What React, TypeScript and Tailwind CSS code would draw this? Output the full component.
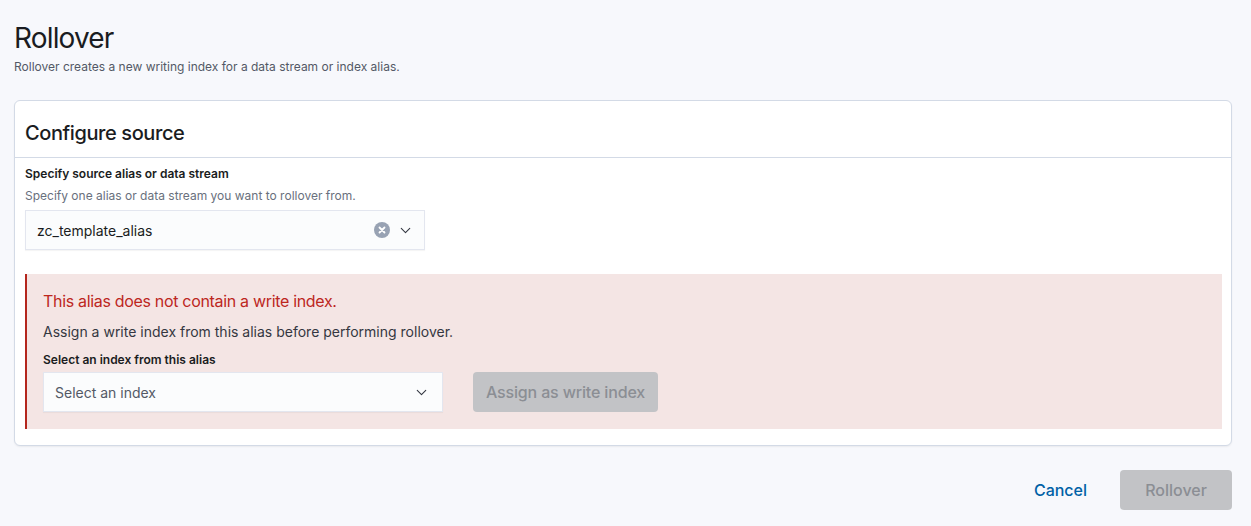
import React from 'react';
import { ChevronDown } from 'lucide-react';

const ClearIcon: React.FC = () => (
  <svg width="16" height="16" viewBox="0 0 16 16" aria-hidden="true">
    <circle cx="8" cy="8" r="8" fill="#98a2b3" />
    <path d="M5.5 5.5l5 5M10.5 5.5l-5 5" stroke="#fff" strokeWidth="1.8" strokeLinecap="round" />
  </svg>
);

const App: React.FC = () => {
  return (
    <div
      className="min-h-screen bg-[#f7f8fc] pl-[14px] pr-[19px] pt-[20px] text-[#343741]"
      style={{ fontFamily: 'Inter, "Noto Sans", sans-serif' }}
    >
      <h1 className="text-[28px] leading-[36px] font-normal tracking-[-0.03em] text-[#1a1c21]">Rollover</h1>
      <p className="mt-[3px] text-[12px] leading-[16px] text-[#535966]">
        Rollover creates a new writing index for a data stream or index alias.
      </p>

      {/* Configure source panel */}
      <div className="mt-[25px] rounded-[6px] border border-[#d3dae6] bg-white shadow-[0_1px_2px_rgba(0,0,0,0.06)]">
        <div className="border-b border-[#d3dae6] px-[10px] pt-[20px] pb-[12px]">
          <h2 className="text-[20px] leading-[24px] font-medium tracking-[-0.02em] text-[#1a1c21]">
            Configure source
          </h2>
        </div>

        <div className="pl-[10px] pr-[9px] pt-[8px] pb-[16px]">
          <div className="text-[12px] leading-[16px] font-semibold text-[#1a1c21]">
            Specify source alias or data stream
          </div>
          <div className="mt-[6px] text-[12px] leading-[16px] text-[#69707d]">
            Specify one alias or data stream you want to rollover from.
          </div>
          <div className="mt-[6px] flex h-[40px] w-[400px] items-center justify-between border border-[#e3e6ef] bg-[#fbfcfd] pl-[11px] pr-[10px] shadow-[0_1px_1px_rgba(0,0,0,0.04)]">
            <span className="text-[14px] text-[#1a1c21]">zc_template_alias</span>
            <div className="flex items-center gap-[7px]">
              <ClearIcon />
              <ChevronDown size={17} strokeWidth={1.5} className="text-[#343741]" />
            </div>
          </div>

          {/* Warning callout */}
          <div className="mt-[24px] border-l-2 border-[#b4261d] bg-[#f4e5e4] pl-[16px] pr-[16px] pt-[15px] pb-[17px]">
            <div className="text-[16px] leading-[24px] tracking-[-0.02em] text-[#bd271e]">
              This alias does not contain a write index.
            </div>
            <p className="mt-[9px] text-[14px] leading-[20px] text-[#343741]">
              Assign a write index from this alias before performing rollover.
            </p>
            <div className="mt-[10px] text-[12px] leading-[16px] font-semibold text-[#1a1c21]">
              Select an index from this alias
            </div>
            <div className="mt-[4px] flex items-center gap-[30px]">
              <div className="flex h-[40px] w-[400px] items-center justify-between border border-[#e3e6ef] bg-[#fbfcfd] pl-[11px] pr-[12px] shadow-[0_1px_1px_rgba(0,0,0,0.04)]">
                <span className="text-[14px] text-[#535966]">Select an index</span>
                <ChevronDown size={17} strokeWidth={1.5} className="text-[#343741]" />
              </div>
              <button
                disabled
                className="h-[40px] w-[185px] rounded-[4px] bg-[#c2c3c6] text-[16px] font-medium tracking-[-0.01em] text-[#8b8e94]"
              >
                Assign as write index
              </button>
            </div>
          </div>
        </div>
      </div>

      {/* Footer actions */}
      <div className="mt-[24px] flex items-center justify-end gap-[17px]">
        <button className="h-[40px] px-[16px] text-[16px] font-medium text-[#0061a6]">Cancel</button>
        <button
          disabled
          className="h-[40px] w-[112px] rounded-[4px] bg-[#c2c3c6] text-[16px] font-medium text-[#8b8e94]"
        >
          Rollover
        </button>
      </div>
    </div>
  );
};

export default App;
